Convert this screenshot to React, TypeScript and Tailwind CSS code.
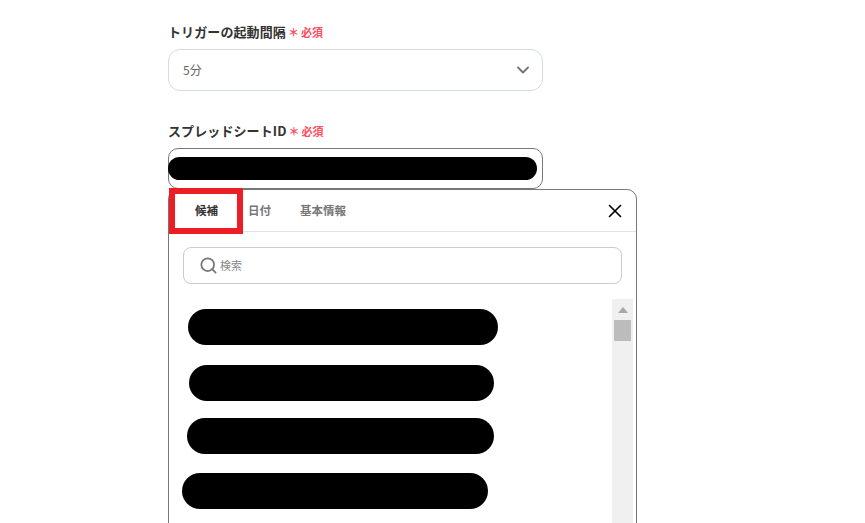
import { ChevronDown, Search, X } from 'lucide-react';

const FONT = "font-['Noto_Sans_CJK_JP','Noto_Sans',sans-serif]";

function FieldLabel({ text }: { text: string }) {
  return (
    <div className="flex h-[20px] items-center">
      <span className="text-[13px] leading-[20px] font-bold tracking-[0.1px] text-[#333]">{text}</span>
      <span className="ml-[2px] text-[11px] leading-[20px] font-bold text-[#ff4d5e]">＊</span>
      <span className="ml-[2px] text-[11px] leading-[20px] font-bold text-[#ff4d5e]">必須</span>
    </div>
  );
}

function Redacted({ left, width, mt }: { left: string; width: string; mt: string }) {
  return <div className={`h-[36px] rounded-full bg-black ${left} ${width} ${mt}`} />;
}

export default function App() {
  return (
    <div className={`h-[523px] w-[865px] overflow-hidden bg-white pt-[22px] pl-[168px] ${FONT}`}>
      <div className="w-[375px]">
        <FieldLabel text="トリガーの起動間隔" />
        <div className="mt-[7px] flex h-[42px] items-center justify-between rounded-[12px] border border-[#d5dae3] pr-[9px] pl-[14px]">
          <span className="text-[12px] text-[#666]">5分</span>
          <ChevronDown size={20} strokeWidth={2.4} className="text-[#777]" />
        </div>
        <div className="mt-[30px]">
          <FieldLabel text="スプレッドシートID" />
        </div>
        <div className="mt-[7px] h-[41px] rounded-[10px] border border-[#777] pt-[8px]">
          <div className="-ml-px h-[23px] w-[369px] rounded-full bg-black" />
        </div>
      </div>

      <div className="relative h-[360px] w-[469px] rounded-t-[10px] border border-[#777]">
        <div className="absolute top-[-2px] left-[0px] h-[46px] w-[74px] border-[6px] border-[#ee1c25]" />
        <div className="flex h-[42px] items-center border-b border-[#e2e2e2] text-[11.5px] font-bold">
          <span className="ml-[26px] text-[#333]">候補</span>
          <span className="ml-[30px] text-[#777]">日付</span>
          <span className="ml-[29px] text-[#777]">基本情報</span>
          <X size={22} strokeWidth={1.8} className="mr-[10px] ml-auto text-black" />
        </div>
        <div className="mx-[14px] mt-[15px] flex h-[37px] items-center rounded-[8px] border border-[#ccc] pl-[15px]">
          <Search size={19} strokeWidth={2.2} className="text-[#777]" />
          <span className="ml-[2px] text-[11px] text-[#888]">検索</span>
        </div>
        <div className="mt-[15px] flex">
          <div className="w-[443px]">
            <Redacted left="ml-[19px]" width="w-[310px]" mt="mt-[10px]" />
            <Redacted left="ml-[20px]" width="w-[305px]" mt="mt-[20px]" />
            <Redacted left="ml-[18px]" width="w-[307px]" mt="mt-[17px]" />
            <Redacted left="ml-[13px]" width="w-[306px]" mt="mt-[19px]" />
          </div>
          <div className="flex h-[300px] w-[21px] flex-col items-center bg-[#f0f0f0] pt-[8px]">
            <div className="h-0 w-0 border-x-[5px] border-b-[6px] border-x-transparent border-b-[#a8a8a8]" />
            <div className="mt-[7px] h-[21px] w-[17px] bg-[#bcbcbc]" />
          </div>
        </div>
      </div>
    </div>
  );
}
